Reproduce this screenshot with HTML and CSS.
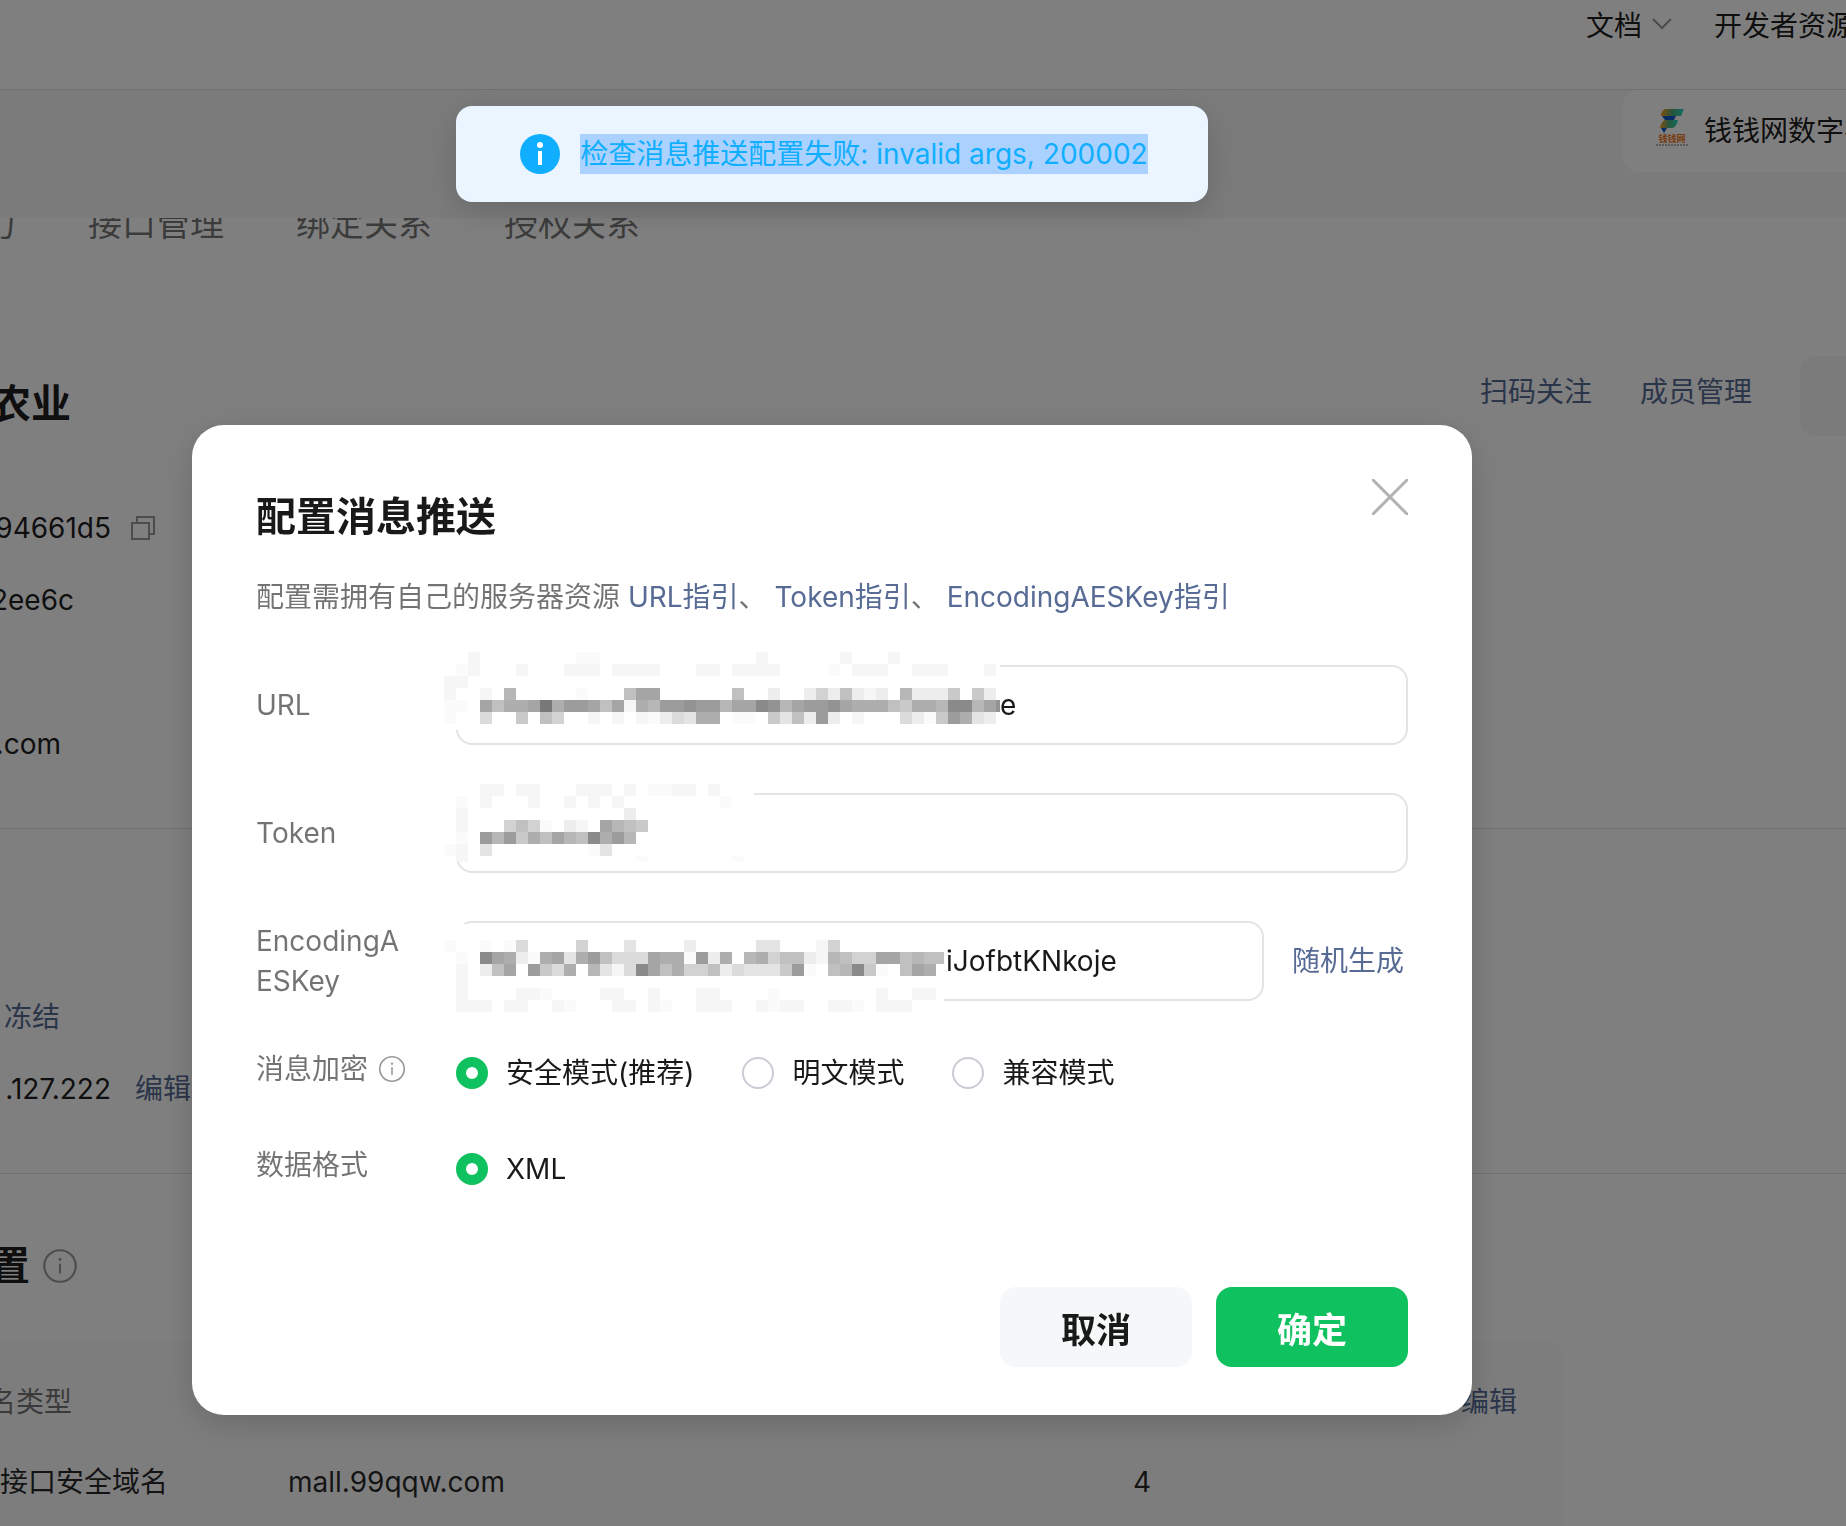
FILE: index.html
```html
<!DOCTYPE html>
<html lang="zh-CN">

<head>
    <meta charset="UTF-8">
    <meta name="viewport" content="width=device-width, initial-scale=1.0">
    <title>配置消息推送</title>
    <link rel="stylesheet" href="styles.css">
</head>

<body>
    <header class="header">
        <nav class="header-nav">
            <a href="#">文档
                <svg class="chevron" viewBox="0 0 20 12" width="20" height="12"><path d="M1 1l9 9 9-9" fill="none" stroke="currentColor" stroke-width="2" /></svg>
            </a>
            <a href="#">开发者资源</a>
        </nav>
    </header>
    <div class="account-bar">
        <a class="account" href="#">
            <svg class="account-logo" viewBox="0 0 32 38" width="32" height="38">
                <defs>
                    <linearGradient id="logoGradient">
                        <stop offset="0" stop-color="#ff9c1a" />
                        <stop offset="0.5" stop-color="#4faa7a" />
                        <stop offset="1" stop-color="#24dcc0" />
                    </linearGradient>
                </defs>
                <path d="M9 1h19l-3 7H5q0-5 4-7z" fill="url(#logoGradient)" />
                <path d="M6 8h14l-2 4H9z" fill="#0c58c8" />
                <path d="M9 12h13q-2 8-6 8H4q1-6 5-8z" fill="url(#logoGradient)" />
                <path d="M5 20h6l-3 5z" fill="#0c58c8" />
                <text x="16" y="34" text-anchor="middle" font-size="9" font-weight="700" fill="#f07818">钱钱网</text>
                <path d="M0 37h32" stroke="#666" stroke-dasharray="2 1" />
            </svg>
            <span>钱钱网数字农业</span>
        </a>
    </div>

    <main class="page">
        <nav class="tabs">
            <a class="tab-first clipped" href="#">能力</a>
            <a href="#">接口管理</a>
            <a href="#">绑定关系</a>
            <a href="#">授权关系</a>
        </nav>

        <section class="app-info">
            <div class="app-head">
                <h1 class="app-name clipped">字农业</h1>
                <div class="app-actions">
                    <a href="#">扫码关注</a>
                    <a href="#">成员管理</a>
                    <button class="app-more" type="button" aria-label="更多"></button>
                </div>
            </div>
            <div class="info-list">
                <div class="info-row">
                    <span class="clipped app-id">94661d5</span>
                    <svg class="copy-icon" viewBox="0 0 24 24" width="24" height="24"><path d="M1 7h17v16H1zM6 7V1h17v17h-5" fill="none" stroke="currentColor" stroke-width="2" /></svg>
                </div>
                <div class="info-row"><span class="clipped origin-id">2ee6c</span></div>
                <div class="info-row"></div>
                <div class="info-row"><span class="clipped email">.com</span></div>
            </div>
        </section>

        <section class="dev-info">
            <div class="info-row"><a class="freeze" href="#">冻结</a></div>
            <div class="info-row">
                <span class="clipped ip">.127.222</span>
                <a class="edit-ip" href="#">编辑</a>
            </div>
        </section>

        <section class="domain">
            <h2 class="domain-title">
                <span class="clipped domain-name">置</span>
                <svg class="info-icon" viewBox="0 0 24 24" width="36" height="36"><circle cx="12" cy="12" r="10.5" /><path d="M12 10.5v6.5" /><circle class="dot" cx="12" cy="7.5" r="1" /></svg>
            </h2>
            <div class="table-box">
                <table>
                    <thead>
                        <tr>
                            <th class="col-type"><span class="clipped type-name">名类型</span></th>
                            <th class="col-domain"></th>
                            <th class="col-count"></th>
                            <th><a href="#">编辑</a></th>
                        </tr>
                    </thead>
                    <tbody>
                        <tr>
                            <td>接口安全域名</td>
                            <td>mall.99qqw.com</td>
                            <td>4</td>
                            <td></td>
                        </tr>
                    </tbody>
                </table>
            </div>
        </section>
    </main>

    <div class="mask">
        <form class="dialog" role="dialog" aria-labelledby="dialogTitle">
            <button class="dialog-close" type="button" aria-label="关闭">
                <svg viewBox="0 0 36 36" width="36" height="36"><path d="M1 1l34 34M35 1L1 35" fill="none" stroke="currentColor" stroke-width="3" stroke-linecap="round" /></svg>
            </button>
            <h2 class="dialog-title" id="dialogTitle">配置消息推送</h2>
            <p class="dialog-desc">配置需拥有自己的服务器资源 <a href="#">URL指引</a>、 <a href="#">Token指引</a>、 <a href="#">EncodingAESKey指引</a></p>

            <div class="form-list">
                <div class="form-row">
                    <label class="form-label" for="url">URL</label>
                    <div class="field">
                        <input class="text-input url-input" id="url" type="text" value="e">
                        <svg class="mosaic mosaic-url" id="mosaicUrl" viewBox="0 0 556 78" width="556" height="78" aria-hidden="true"></svg>
                    </div>
                </div>
                <div class="form-row">
                    <label class="form-label" for="token">Token</label>
                    <div class="field">
                        <input class="text-input" id="token" type="text">
                        <svg class="mosaic mosaic-token" id="mosaicToken" viewBox="0 0 310 78" width="310" height="78" aria-hidden="true"></svg>
                    </div>
                </div>
                <div class="form-row">
                    <label class="form-label" for="aesKey">EncodingAESKey</label>
                    <div class="field">
                        <input class="text-input key-input" id="aesKey" type="text" value="iJofbtKNkoje">
                        <svg class="mosaic mosaic-key" id="mosaicKey" viewBox="0 -16 500 88" width="500" height="88" aria-hidden="true"></svg>
                    </div>
                    <a class="random" href="#">随机生成</a>
                </div>
                <div class="form-row form-row-radio">
                    <span class="form-label">消息加密
                        <svg class="info-icon" viewBox="0 0 24 24" width="28" height="28"><circle cx="12" cy="12" r="10.5" /><path d="M12 10.5v6.5" /><circle class="dot" cx="12" cy="7.5" r="1" /></svg>
                    </span>
                    <div class="radios">
                        <label><input type="radio" name="mode" checked>安全模式(推荐)</label>
                        <label><input type="radio" name="mode">明文模式</label>
                        <label><input type="radio" name="mode">兼容模式</label>
                    </div>
                </div>
                <div class="form-row form-row-radio">
                    <span class="form-label">数据格式</span>
                    <div class="radios">
                        <label><input type="radio" name="format" checked>XML</label>
                    </div>
                </div>
            </div>

            <div class="dialog-footer">
                <button class="btn" type="button">取消</button>
                <button class="btn btn-primary" type="button">确定</button>
            </div>
        </form>
    </div>

    <div class="toast-wrap">
        <div class="toast" role="alert">
            <svg viewBox="0 0 40 40" width="40" height="40"><circle cx="20" cy="20" r="20" fill="#10aeff" /><circle cx="20" cy="11" r="3" fill="#fff" /><path d="M20 17v14" stroke="#fff" stroke-width="4" /></svg>
            <span class="toast-text">检查消息推送配置失败: invalid args, 200002</span>
        </div>
    </div>

    <script>
        const CELL = 12;

        // one character per cell: "." empty, "," very light, 1-f darker and darker
        const mosaics = {
            mosaicUrl: [
                '..1........,,.............1......1...1',
                '.,1...1...111.1111...11.1111....,.111..111...1',
                '11',
                '1..1.8.....,...7aa......7..2..2527212.82226.62',
                ',,.a799af9bba7a198bbcbb8aadc8abbca99976998dd8ac',
                ',..4..6.75..1.1.1,24399.,,.6372b2.1...42,6b932'
            ],
            mosaicToken: [
                '...11.11...111.1.,,11.1',
                '.,.1...1..1.1.1........,',
                '.1.............2',
                '.1...575,.21.a876',
                '.,.b8b697a87d9b8',
                ',1.3........,3',
                '.1..............,.......,'
            ],
            mosaicKey: [
                ',..,.,4....5...3....2.....33...15',
                '.,.da92,9a39b7444a99,b29.89577218755aa7877',
                '.1.27a.b649.8314da79557243336b,.78d6,.7a9',
                '.1',
                '.1....11,....11..1...11....,........1..11',
                '.111.11..1,...11.1,..111..1,11..11,.111'
            ]
        };

        Object.keys(mosaics).forEach(id => {
            const svg = document.getElementById(id);
            mosaics[id].forEach((row, y) => {
                [...row].forEach((char, x) => {
                    if (char === '.') return;
                    const level = char === ',' ? 251 : 255 - parseInt(char, 16) * 9;
                    const rect = document.createElementNS('http://www.w3.org/2000/svg', 'rect');
                    rect.setAttribute('x', x * CELL);
                    rect.setAttribute('y', y * CELL);
                    rect.setAttribute('width', CELL);
                    rect.setAttribute('height', CELL);
                    rect.setAttribute('fill', `rgb(${level}, ${level}, ${level})`);
                    svg.appendChild(rect);
                });
            });
        });
    </script>
</body>

</html>
```
FILE: styles.css
```css
* {
    box-sizing: border-box;
}

body {
    margin: 0;
    height: 100vh;
    overflow: hidden;
    background: #fff;
    color: rgba(0, 0, 0, 0.9);
    font-family: Inter, "Noto Sans CJK SC", sans-serif;
    font-size: 28px;
    line-height: 40px;
}

h1,
h2,
p {
    margin: 0;
}

a {
    color: #576b95;
    text-decoration: none;
}

button,
input {
    font-family: inherit;
}

/* text scrolled out past the left edge */
.clipped {
    display: flex;
    justify-content: flex-end;
    overflow: hidden;
    white-space: nowrap;
}

.header {
    display: flex;
    justify-content: flex-end;
    height: 90px;
    padding-top: 6px;
    border-bottom: 1px solid #e0e0e0;
}

.header-nav {
    display: flex;
    gap: 42px;
    width: 260px;
    overflow: hidden;
    white-space: nowrap;
}

.header-nav a,
.account {
    color: rgba(0, 0, 0, 0.9);
}

.header-nav a {
    flex-shrink: 0;
}

.chevron {
    margin-left: 2px;
    vertical-align: 6px;
    color: #999;
}

.account-bar {
    position: relative;
    z-index: 1;
    display: flex;
    justify-content: flex-end;
    height: 128px;
    background: #f6f6f6;
}

.account {
    display: flex;
    align-items: center;
    gap: 16px;
    width: 223px;
    height: 82px;
    padding-left: 33px;
    overflow: hidden;
    border-radius: 16px 0 0 16px;
    background: #fff;
    white-space: nowrap;
}

.account-logo {
    flex-shrink: 0;
    margin-bottom: 8px;
}

.tabs {
    display: flex;
    gap: 72px;
    margin-top: -18px;
    font-size: 34px;
    line-height: 48px;
}

.tabs a {
    color: rgba(0, 0, 0, 0.55);
}

.tab-first {
    width: 16px;
}

.app-info {
    padding: 108px 0 64px;
    border-bottom: 1px solid #e0e0e0;
}

.app-head {
    display: flex;
    align-items: center;
    justify-content: space-between;
    height: 96px;
}

.app-name {
    width: 71px;
    font-size: 40px;
    line-height: 56px;
}

.app-actions {
    display: flex;
    gap: 48px;
    padding-bottom: 16px;
}

.app-actions a {
    padding-top: 16px;
}

.app-more {
    width: 46px;
    height: 80px;
    border: 0;
    border-radius: 16px 0 0 16px;
    background: #f6f6f6;
}

.info-list {
    padding-top: 56px;
}

.info-row {
    display: flex;
    align-items: center;
    height: 40px;
    margin-bottom: 32px;
}

.info-row:last-child {
    margin-bottom: 0;
}

.copy-icon {
    margin-left: 20px;
    color: #999;
}

.app-id,
.ip {
    width: 111px;
}

.origin-id {
    width: 74px;
}

.email {
    width: 61px;
}

.dev-info {
    padding: 168px 0 64px;
    border-bottom: 1px solid #e0e0e0;
}

.freeze {
    padding-left: 4px;
}

.edit-ip {
    padding-left: 24px;
}

.domain {
    padding-top: 64px;
}

.domain-title {
    display: flex;
    align-items: center;
    gap: 12px;
    font-size: 40px;
    line-height: 56px;
}

.domain-name {
    width: 30px;
}

.info-icon {
    fill: none;
    stroke: #999;
    stroke-width: 1.4;
}

.info-icon .dot {
    fill: #999;
    stroke: none;
}

.table-box {
    height: 200px;
    margin: 48px 282px 0 0;
    border-radius: 0 16px 0 0;
    background: #fbfbfb;
}

.table-box table {
    width: 100%;
    table-layout: fixed;
    border-collapse: collapse;
}

.table-box th,
.table-box td {
    height: 40px;
    padding: 0;
    font-weight: 400;
    text-align: left;
    color: rgba(0, 0, 0, 0.85);
}

.table-box th {
    height: 120px;
    color: rgba(0, 0, 0, 0.55);
}

.col-type {
    width: 288px;
}

.col-domain {
    width: 845px;
}

.col-count {
    width: 328px;
}

.type-name {
    width: 72px;
}

.mask {
    position: fixed;
    inset: 0;
    display: flex;
    align-items: flex-start;
    justify-content: center;
    z-index: 10;
    padding: 425px 182px 0 0;
    background: rgba(0, 0, 0, 0.5);
}

.dialog {
    position: relative;
    width: 1280px;
    padding: 64px 64px 48px;
    border-radius: 32px;
    background: #fff;
    box-shadow: 0 8px 32px rgba(0, 0, 0, 0.16);
}

.dialog-close {
    position: absolute;
    top: 54px;
    right: 64px;
    padding: 0;
    border: 0;
    background: none;
    color: #b2b2b2;
    line-height: 0;
    cursor: pointer;
}

.dialog-title {
    font-size: 40px;
    line-height: 56px;
}

.dialog-desc {
    margin-top: 32px;
    color: rgba(0, 0, 0, 0.55);
}

.form-list {
    display: flex;
    flex-direction: column;
    gap: 48px;
    margin-top: 48px;
}

.form-row {
    display: flex;
    align-items: center;
}

.form-label {
    display: flex;
    align-items: center;
    gap: 10px;
    flex-shrink: 0;
    width: 200px;
    padding-right: 48px;
    color: rgba(0, 0, 0, 0.55);
    word-break: break-all;
}

.field {
    position: relative;
    flex: 1;
    height: 80px;
}

.text-input {
    width: 100%;
    height: 80px;
    padding: 0 24px;
    border: 2px solid #e4e4e4;
    border-radius: 16px;
    background: #fff;
    color: rgba(0, 0, 0, 0.9);
    font-size: 28px;
}

/* the start of the value is covered by the mosaic */
.url-input {
    padding-left: 542px;
}

.key-input {
    padding-left: 488px;
}

.mosaic {
    position: absolute;
    left: -12px;
    background: #fff;
}

.mosaic-url {
    top: -13px;
}

.mosaic-token {
    top: -9px;
}

.mosaic-key {
    top: 3px;
}

.random {
    padding: 0 4px 0 28px;
}

.form-row-radio {
    align-items: flex-start;
}

.form-row-radio .form-label {
    padding-right: 0;
}

.radios {
    display: flex;
    align-items: center;
    gap: 48px;
    height: 48px;
}

.radios label {
    display: flex;
    align-items: center;
    gap: 18px;
}

.radios input {
    appearance: none;
    width: 32px;
    height: 32px;
    margin: 0;
    border: 2px solid #c9ccd4;
    border-radius: 50%;
    background: #fff;
}

.radios input:checked {
    border: 10px solid #10c160;
}

.dialog-footer {
    display: flex;
    justify-content: flex-end;
    gap: 24px;
    margin-top: 94px;
}

.btn {
    width: 192px;
    height: 80px;
    padding: 0;
    border: 0;
    border-radius: 16px;
    background: #f6f7f9;
    color: rgba(0, 0, 0, 0.9);
    font-size: 35px;
    font-weight: 700;
    cursor: pointer;
}

.btn-primary {
    background: #10c160;
    color: #fff;
}

.toast-wrap {
    position: fixed;
    top: 106px;
    left: 0;
    right: 182px;
    display: flex;
    justify-content: center;
    z-index: 20;
}

.toast {
    display: flex;
    gap: 20px;
    padding: 28px 60px 28px 64px;
    border-radius: 16px;
    background: #eaf5ff;
    box-shadow: 0 8px 32px rgba(0, 0, 0, 0.16);
    color: #10aeff;
}

.toast-text {
    background: #abd2ff;
}
```
